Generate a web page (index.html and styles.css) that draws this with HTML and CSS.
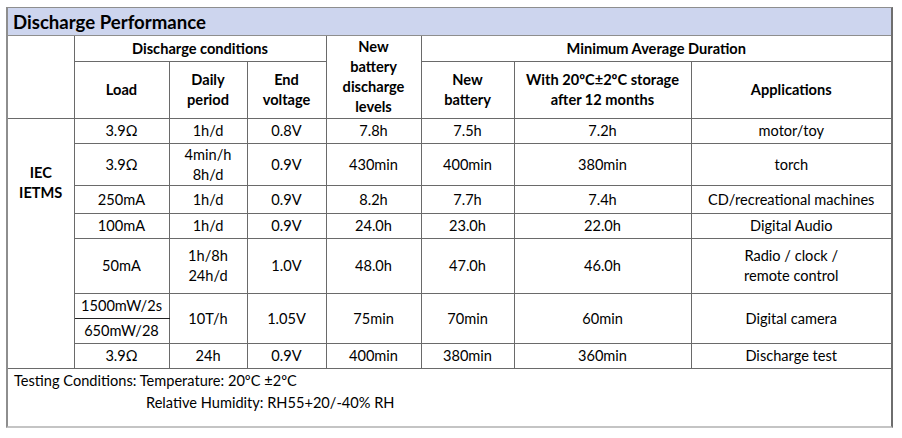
FILE: index.html
```html
<!DOCTYPE html>
<html lang="en">
<head>
<meta charset="utf-8">
<title>Discharge Performance</title>
<link rel="stylesheet" href="styles.css">
</head>
<body>
<div class="frame">
  <table class="perf">
    <colgroup>
      <col class="c1"><col class="c2"><col class="c3"><col class="c4">
      <col class="c5"><col class="c6"><col class="c7"><col class="c8">
    </colgroup>
    <tr class="r-title">
      <td colspan="8" class="title">Discharge Performance</td>
    </tr>
    <tr class="r-h1">
      <td rowspan="2" class="blank"></td>
      <th colspan="3">Discharge conditions</th>
      <th rowspan="2">New<br>battery<br>discharge<br>levels</th>
      <th colspan="3">Minimum Average Duration</th>
    </tr>
    <tr class="r-h2">
      <th>Load</th>
      <th>Daily<br>period</th>
      <th>End<br>voltage</th>
      <th>New<br>battery</th>
      <th>With 20ºC±2ºC storage<br>after 12 months</th>
      <th>Applications</th>
    </tr>
    <tr class="r25">
      <th rowspan="8" class="std">IEC<br>IETMS</th>
      <td>3.9Ω</td><td>1h/d</td><td>0.8V</td><td>7.8h</td><td>7.5h</td><td>7.2h</td><td>motor/toy</td>
    </tr>
    <tr class="r42">
      <td>3.9Ω</td><td>4min/h<br>8h/d</td><td>0.9V</td><td>430min</td><td>400min</td><td>380min</td><td>torch</td>
    </tr>
    <tr class="r28">
      <td>250mA</td><td>1h/d</td><td>0.9V</td><td>8.2h</td><td>7.7h</td><td>7.4h</td><td>CD/recreational machines</td>
    </tr>
    <tr class="r25">
      <td>100mA</td><td>1h/d</td><td>0.9V</td><td>24.0h</td><td>23.0h</td><td>22.0h</td><td>Digital Audio</td>
    </tr>
    <tr class="r55">
      <td>50mA</td><td>1h/8h<br>24h/d</td><td>1.0V</td><td>48.0h</td><td>47.0h</td><td>46.0h</td><td>Radio / clock /<br>remote control</td>
    </tr>
    <tr class="r25 dark-top">
      <td class="split">1500mW/2s</td>
      <td rowspan="2">10T/h</td><td rowspan="2">1.05V</td><td rowspan="2">75min</td><td rowspan="2">70min</td><td rowspan="2">60min</td><td rowspan="2">Digital camera</td>
    </tr>
    <tr class="r25">
      <td>650mW/28</td>
    </tr>
    <tr class="r25">
      <td>3.9Ω</td><td>24h</td><td>0.9V</td><td>400min</td><td>380min</td><td>360min</td><td>Discharge test</td>
    </tr>
    <tr class="r-foot">
      <td colspan="8" class="foot">
        <div class="foot-line">Testing Conditions: Temperature: 20ºC ±2ºC</div>
        <div class="foot-line indent">Relative Humidity: RH55+20/-40% RH</div>
      </td>
    </tr>
  </table>
</div>
</body>
</html>
```

FILE: styles.css
```css
html, body {
  margin: 0;
  padding: 0;
  background: #ffffff;
}

body {
  font-family: Lato, "Noto Sans", "Liberation Sans", sans-serif;
  color: #000;
  padding: 7px 0 0 6px;
}

.frame {
  width: 887px;
  border-left: 2px solid #8e8e8e;
  border-right: 2px solid #6e6e6e;
  border-bottom: 2px solid #c4c4c4;
  border-top: 1px solid #8e8e8e;
  box-sizing: border-box;
}

.perf {
  width: 883px;
  table-layout: fixed;
  border-collapse: collapse;
  font-size: 14.6px;
  line-height: 20px;
}

.c1 { width: 66px; }
.c2 { width: 95px; }
.c3 { width: 78px; }
.c4 { width: 79px; }
.c5 { width: 95px; }
.c6 { width: 93px; }
.c7 { width: 177px; }
.c8 { width: 200px; }

.perf td, .perf th {
  border: 1px solid #6a6a6a;
  padding: 0 2px;
  text-align: center;
  vertical-align: middle;
  font-weight: normal;
  white-space: nowrap;
}

.perf th {
  font-weight: bold;
}

.perf tr > :first-child { border-left: none; }
.perf tr > :last-child { border-right: none; }

.r-title td.title {
  border-top: none;
  background: #cdd5ee;
  text-align: left;
  font-weight: bold;
  font-size: 18.6px;
  padding: 0 0 0 5px;
  height: 27px;
  border-bottom: 1px solid #8e8e8e;
}

.r-h1 { height: 26px; }
.r-h2 { height: 57px; }
.r25 { height: 25px; }
.r28 { height: 28px; }
.r42 { height: 42px; }
.r55 { height: 55px; }

.perf th.std {
  vertical-align: top;
  padding-top: 44px;
  border-left: none;
}

.dark-top td { border-top: 1px solid #222; }
.perf td.split { border-bottom: 1px solid #222; }

.r-foot td.foot {
  text-align: left;
  vertical-align: top;
  border-bottom: none;
  padding: 1px 0 0 6px;
  height: 56px;
  line-height: 22px;
}

.foot-line.indent {
  padding-left: 132px;
}
```
